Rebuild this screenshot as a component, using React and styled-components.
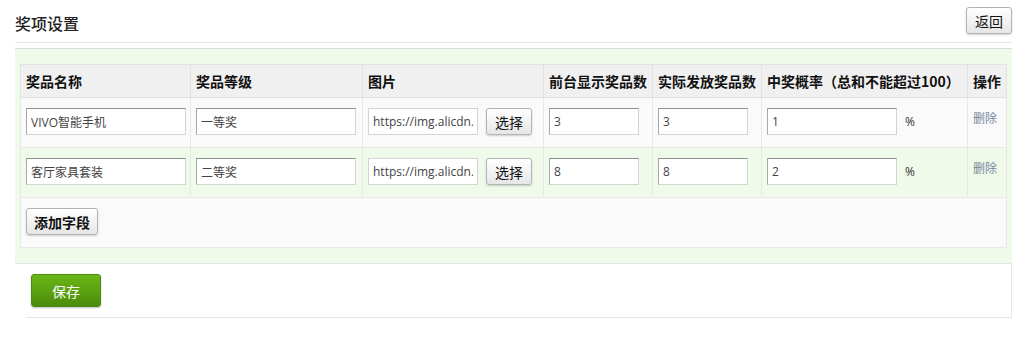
import React from 'react';
import styled, { createGlobalStyle } from 'styled-components';

const GlobalStyle = createGlobalStyle`
  body {
    margin: 0;
    background: #fff;
    font-family: "Open Sans", "Noto Sans CJK SC", sans-serif;
    font-size: 13px;
    color: #333;
  }
`

const Page = styled.div`
  padding: 0 13px 0 15px;
`

const Header = styled.div`
  display: flex;
  justify-content: space-between;
  align-items: flex-start;
  height: 43px;
  box-sizing: border-box;
  border-bottom: 1px solid #e6e6e6;
`

const Title = styled.h2`
  margin: 0;
  padding-top: 12px;
  font-size: 16px;
  line-height: 22px;
  font-weight: 500;
  color: #222;
  font-family: "Noto Sans CJK SC", sans-serif;
`

const Button = styled.button`
  box-sizing: border-box;
  height: ${p => p.$h || 27}px;
  padding: 0 ${p => p.$px || 8}px;
  font-family: "Noto Sans CJK SC", sans-serif;
  font-size: 14px;
  font-weight: ${p => (p.$bold ? 700 : 400)};
  color: #111;
  background: linear-gradient(#ffffff, #e6e6e6);
  border: 1px solid #b4b4b4;
  border-radius: 3px;
  box-shadow: 0 1px 2px rgba(0, 0, 0, 0.18);
  cursor: pointer;
`

const BackButton = styled(Button)`
  margin-top: 7px;
  width: 46px;
`

const Panel = styled.div`
  margin-top: 5px;
  border-top: 1px solid #dadada;
  border-bottom: 1px solid #e6e6e6;
  background: #effaea;
  padding: 15px 6px 15px 5px;
`

const Table = styled.table`
  width: 986px;
  table-layout: fixed;
  border-collapse: collapse;
`

const Th = styled.th`
  height: 32px;
  padding: 0 5px;
  text-align: left;
  font-family: "Noto Sans CJK SC", sans-serif;
  font-size: 14px;
  font-weight: 700;
  color: #111;
  background: #f0f0f0;
  border: 1px solid #e2e2e2;
  white-space: nowrap;
`

const Row = styled.tr`
  background: ${p => (p.$green ? '#effaea' : '#fafafa')};
`

const Td = styled.td`
  padding: 10px 5px 12px;
  vertical-align: top;
  border: 1px solid #e8e8e8;
  white-space: nowrap;
`

const Input = styled.input`
  box-sizing: border-box;
  width: ${p => p.$w}px;
  height: 27px;
  padding: 0 4px;
  vertical-align: middle;
  font-family: "Open Sans", "Noto Sans CJK SC", sans-serif;
  font-size: 12px;
  color: #444;
  background: #fff;
  border: 1px solid #d4d4d4;
  border-top-color: ${p => (p.$flat ? '#d4d4d4' : '#8f8f8f')};
  border-left-color: ${p => (p.$flat ? '#d4d4d4' : '#a8a8a8')};
  outline: none;
`

const PickButton = styled(Button)`
  margin-left: 8px;
  width: 46px;
  vertical-align: middle;
`

const Percent = styled.span`
  margin-left: 8px;
  vertical-align: middle;
  font-size: 12px;
  color: #333;
`

const DeleteLink = styled.a`
  display: inline-block;
  padding-top: 1px;
  font-family: "Noto Sans CJK SC", sans-serif;
  font-size: 12px;
  color: #7886a0;
  text-decoration: none;
`

const Footer = styled.div`
  margin-left: 11px;
  padding: 10px 5px 10px;
  border-right: 1px solid #e6e6e6;
  border-bottom: 1px solid #e6e6e6;
`

const SaveButton = styled.button`
  box-sizing: border-box;
  width: 70px;
  height: 33px;
  font-family: "Noto Sans CJK SC", sans-serif;
  font-size: 14px;
  color: #fff;
  background: linear-gradient(#6bb717, #4a8c0b);
  border: 1px solid #4c8a14;
  border-radius: 3px;
  box-shadow: 0 1px 2px rgba(0, 0, 0, 0.25);
  cursor: pointer;
`

const columns = [
  { title: '奖品名称', width: 170 },
  { title: '奖品等级', width: 172 },
  { title: '图片', width: 181 },
  { title: '前台显示奖品数', width: 109 },
  { title: '实际发放奖品数', width: 109 },
  { title: '中奖概率（总和不能超过100）', width: 206 },
  { title: '操作', width: 39 },
];

const prizes = [
  { name: 'VIVO智能手机', level: '一等奖', img: 'https://img.alicdn.com/prize1.jpg', shown: '3', actual: '3', rate: '1' },
  { name: '客厅家具套装', level: '二等奖', img: 'https://img.alicdn.com/prize2.jpg', shown: '8', actual: '8', rate: '2' },
];

const App = () => {
  return (
    <Page>
      <GlobalStyle />
      <Header>
        <Title>奖项设置</Title>
        <BackButton>返回</BackButton>
      </Header>
      <Panel>
        <Table>
          <colgroup>
            {columns.map(c => (
              <col key={c.title} style={{ width: c.width }} />
            ))}
          </colgroup>
          <thead>
            <tr>
              {columns.map(c => (
                <Th key={c.title}>{c.title}</Th>
              ))}
            </tr>
          </thead>
          <tbody>
            {prizes.map((p, i) => (
              <Row key={p.name} $green={i % 2 === 1}>
                <Td><Input $w={160} defaultValue={p.name} /></Td>
                <Td><Input $w={160} defaultValue={p.level} /></Td>
                <Td>
                  <Input $w={110} $flat defaultValue={p.img} />
                  <PickButton>选择</PickButton>
                </Td>
                <Td><Input $w={90} defaultValue={p.shown} /></Td>
                <Td><Input $w={90} defaultValue={p.actual} /></Td>
                <Td>
                  <Input $w={130} defaultValue={p.rate} />
                  <Percent>%</Percent>
                </Td>
                <Td><DeleteLink href="#">删除</DeleteLink></Td>
              </Row>
            ))}
            <Row>
              <Td colSpan={7}>
                <Button $bold $px={7}>添加字段</Button>
              </Td>
            </Row>
          </tbody>
        </Table>
      </Panel>
      <Footer>
        <SaveButton>保存</SaveButton>
      </Footer>
    </Page>
  );
};

export default App;
